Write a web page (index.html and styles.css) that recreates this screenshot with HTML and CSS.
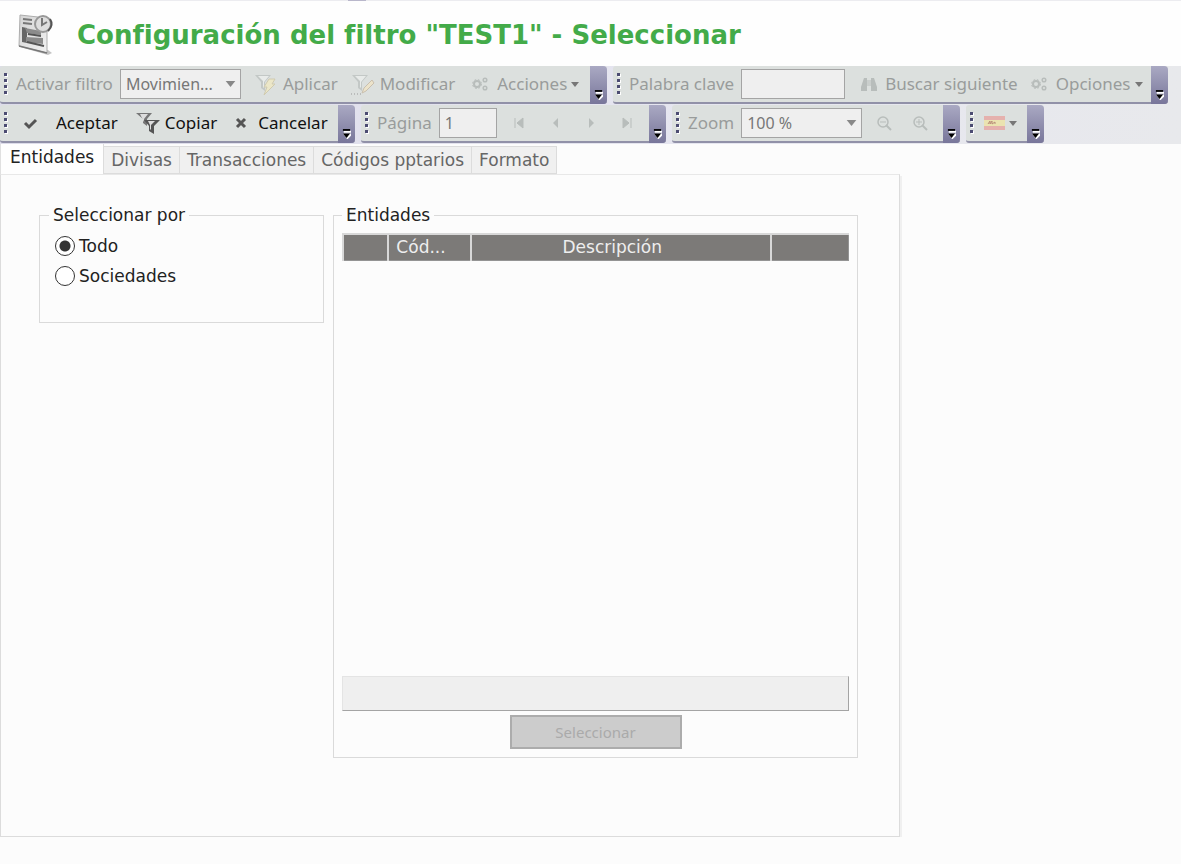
FILE: index.html
```html
<!DOCTYPE html>
<html lang="es">
<head>
	<meta charset="UTF-8">
	<title>Configuración del filtro</title>
	<meta name="viewport" content="width=device-width, initial-scale=1.0">
	<link rel="stylesheet" href="styles.css">
</head>
<body>

	<svg class="symbols" aria-hidden="true">
		<symbol id="gears" viewBox="0 0 16 16">
			<circle cx="5" cy="8" r="3" fill="none" stroke="currentColor" stroke-width="2"/>
			<circle cx="5" cy="8" r="4.500" fill="none" stroke="currentColor" stroke-dasharray="1.800 1.800"/>
			<circle cx="13" cy="4" r="1.800" fill="none" stroke="currentColor" stroke-width="1.500"/>
			<circle cx="13" cy="12" r="1.800" fill="none" stroke="currentColor" stroke-width="1.500"/>
		</symbol>
		<symbol id="funnel" viewBox="0 0 24 24">
			<path d="M1 3h16l-6 7v9l-4-3v-6z" fill="#c3c8c6"/>
			<path d="M4 4h11l-5 6v6l-1-1v-6z" fill="#e8ebe9"/>
		</symbol>
		<symbol id="overflow" viewBox="0 0 10 11">
			<path d="M2 3h8M3 6h7l-4 4z" fill="#fff" stroke="#fff" stroke-width="2"/>
			<path d="M1 1h8" stroke="#000" stroke-width="2"/>
			<path d="M1 5h8l-4 5z"/>
		</symbol>
		<symbol id="caret" viewBox="0 0 8 5">
			<path d="M0 0h8l-4 5z" fill="currentColor"/>
		</symbol>
		<symbol id="prev" viewBox="0 0 16 16">
			<path d="M11 3v10l-5-5z" fill="currentColor"/>
		</symbol>
	</svg>

	<div id="header">
		<svg class="logo" viewBox="0 0 40 46">
			<defs>
				<linearGradient id="sheet" x1="0" y1="0" x2="1" y2="1">
					<stop offset="0" stop-color="#d4d4d4"/>
					<stop offset="1" stop-color="#f1f1f1"/>
				</linearGradient>
			</defs>
			<path d="M4 35l28 8 4-2-4-3z" fill="#c4c4c4"/>
			<path d="M4 3l27 3v35L3 34z" fill="url(#sheet)" stroke="#adadad"/>
			<path d="M3 34l28 7" stroke="#777" stroke-width="1.500"/>
			<path d="M7 7l9 1M7 11l9 1" stroke="#777" stroke-width="2"/>
			<path d="M6 15l5 1v15l-5-1z" fill="#666"/>
			<path d="M9 16l16 3v4l-14-2zM10 25l17 1v6l-17-2z" fill="#8b8b8b"/>
			<path d="M12 22l13 2M11 30l17 4" stroke="#555" stroke-width="2"/>
			<circle cx="27" cy="12" r="8" fill="#dedede" stroke="#999" stroke-width="2"/>
			<path d="M34 7q4 6-2 12" fill="none" stroke="#555" stroke-width="2"/>
			<path d="M26 6v7l5-3" fill="none" stroke="#777" stroke-width="2"/>
		</svg>
		<h1>Configuración del filtro "TEST1" - Seleccionar</h1>
	</div>

	<div id="toolbars">
		<div class="row">
			<div class="toolbar filter">
				<span class="grip"></span>
				<label for="filter">Activar filtro</label>
				<span class="combo">
					<select id="filter" disabled><option>Movimien...</option></select>
					<svg class="arrow"><use href="#caret"/></svg>
				</span>
				<button disabled>
					<svg class="big" viewBox="0 0 24 24"><use href="#funnel"/><path d="M15 7h6l-3 5h3L10 23l3-8h-3z" fill="#ece7c8" stroke="#d0cbb0"/></svg>
					Aplicar
				</button>
				<button disabled>
					<svg class="big" viewBox="0 0 24 24"><use href="#funnel"/><path d="M11 21l2-5 8-8 2 3-8 8z" fill="#ece3ca" stroke="#c9bfae"/><path d="M0 22h11" stroke="#999" stroke-dasharray="1 2"/></svg>
					Modificar
				</button>
				<button class="menu" disabled>
					<svg class="small"><use href="#gears"/></svg>
					Acciones
					<svg class="caret"><use href="#caret"/></svg>
				</button>
				<button class="more" aria-label="Más opciones"><svg><use href="#overflow"/></svg></button>
			</div>
			<div class="toolbar search">
				<span class="grip"></span>
				<label for="keyword">Palabra clave</label>
				<input id="keyword" class="keyword" type="text" disabled>
				<button class="find" disabled>
					<svg class="small" viewBox="0 0 16 16"><path d="M3 2h3v2h4V2h3l3 9v4h-6v-5H6v5H0v-4z" fill="currentColor"/><path d="M7 4v6M9 4v6" stroke="#dce0de"/></svg>
					Buscar siguiente
				</button>
				<button class="menu" disabled>
					<svg class="small"><use href="#gears"/></svg>
					Opciones
					<svg class="caret"><use href="#caret"/></svg>
				</button>
				<button class="more" aria-label="Más opciones"><svg><use href="#overflow"/></svg></button>
			</div>
		</div>
		<div class="row">
			<div class="toolbar actions">
				<span class="grip"></span>
				<button class="accept">
					<svg class="small" viewBox="0 0 16 16"><path d="M3 8l4 4 7-7" fill="none" stroke="#555" stroke-width="3"/></svg>
					Aceptar
				</button>
				<button class="copy">
					<svg class="big" viewBox="0 0 24 24">
						<path d="M0 2h16l-5 6v7l-4-3V8z" fill="#777"/>
						<path d="M4 3h8L8 8v3L7 9z" fill="#ddd"/>
						<path d="M8 9h16l-6 6v8l-5-3v-5z" fill="#555"/>
						<path d="M12 10h7l-4 4v5l-1-1v-4z" fill="#ddd"/>
					</svg>
					Copiar
				</button>
				<button class="cancel">
					<svg class="small" viewBox="0 0 16 16"><path d="M4 4l8 8M12 4l-8 8" stroke="#555" stroke-width="3"/></svg>
					Cancelar
				</button>
				<button class="more" aria-label="Más opciones"><svg><use href="#overflow"/></svg></button>
			</div>
			<div class="toolbar pages">
				<span class="grip"></span>
				<label for="page">Página</label>
				<input id="page" class="page" type="text" value="1" disabled>
				<div class="pager">
					<button disabled aria-label="Primera"><svg class="small" viewBox="0 0 16 16"><path d="M4 3v10M12 3v10L6 8z" fill="currentColor" stroke="currentColor"/></svg></button>
					<button disabled aria-label="Anterior"><svg class="small"><use href="#prev"/></svg></button>
					<button disabled aria-label="Siguiente"><svg class="small" viewBox="0 0 16 16"><path d="M6 3v10l5-5z" fill="currentColor"/></svg></button>
					<button disabled aria-label="Última"><svg class="small" viewBox="0 0 16 16"><path d="M12 3v10M4 3v10l6-5z" fill="currentColor" stroke="currentColor"/></svg></button>
				</div>
				<button class="more" aria-label="Más opciones"><svg><use href="#overflow"/></svg></button>
			</div>
			<div class="toolbar zoom">
				<span class="grip"></span>
				<label for="zoom">Zoom</label>
				<span class="combo">
					<select id="zoom" disabled><option>100 %</option></select>
					<svg class="arrow"><use href="#caret"/></svg>
				</span>
				<div class="pager">
					<button disabled aria-label="Alejar"><svg class="small" viewBox="0 0 16 16"><path d="M10 10l5 5" stroke="currentColor" stroke-width="2"/><circle cx="7" cy="7" r="5" fill="none" stroke="currentColor" stroke-width="1.500"/><path d="M4 7h6" stroke="currentColor"/></svg></button>
					<button disabled aria-label="Acercar"><svg class="small" viewBox="0 0 16 16"><path d="M10 10l5 5" stroke="currentColor" stroke-width="2"/><circle cx="7" cy="7" r="5" fill="none" stroke="currentColor" stroke-width="1.500"/><path d="M4 7h6M7 4v6" stroke="currentColor"/></svg></button>
				</div>
				<button class="more" aria-label="Más opciones"><svg><use href="#overflow"/></svg></button>
			</div>
			<div class="toolbar language">
				<span class="grip"></span>
				<button class="menu" aria-label="Idioma">
					<svg class="flag" viewBox="0 0 21 14"><path d="M0 0h21v14H0z" fill="#e5b1ad"/><path d="M0 4h21v6H0z" fill="#ebe3b0"/><path d="M4 8l2-3v3l2-3v3l3-2v2" fill="none" stroke="#b98d78"/></svg>
					<svg class="caret"><use href="#caret"/></svg>
				</button>
				<button class="more" aria-label="Más opciones"><svg><use href="#overflow"/></svg></button>
			</div>
		</div>
	</div>

	<div id="tabs">
		<button class="active">Entidades</button>
		<button>Divisas</button>
		<button>Transacciones</button>
		<button>Códigos pptarios</button>
		<button>Formato</button>
	</div>

	<div id="main">
		<fieldset class="by">
			<legend>Seleccionar por</legend>
			<label><input type="radio" name="by" checked>Todo</label>
			<label><input type="radio" name="by">Sociedades</label>
		</fieldset>
		<fieldset class="entities">
			<legend>Entidades</legend>
			<table>
				<thead>
					<tr>
						<th class="mark"></th>
						<th class="code">Cód...</th>
						<th>Descripción</th>
						<th class="last"></th>
					</tr>
				</thead>
			</table>
			<div class="status"></div>
			<button class="select" disabled>Seleccionar</button>
		</fieldset>
	</div>

</body>
</html>
```

FILE: styles.css
```css
* {
	box-sizing: border-box;
}
body {
	background: #fcfcfc;
	color: #222;
	font-family: "DejaVu Sans", Verdana, sans-serif;
	font-size: 17px;
	line-height: 20px;
	margin: 0;
}
button, input, select {
	font: inherit;
	margin: 0;
}
.symbols {
	display: block;
	height: 0;
	width: 0;
}
#header {
	align-items: center;
	background:
		linear-gradient(#b9b7cb, #b9b7cb) 348px 0 / 18px 1px no-repeat,
		linear-gradient(#ececf0, #ececf0) 0 0 / 100% 1px no-repeat,
		#fefefe;
	display: flex;
	gap: 21px;
	height: 66px;
	padding: 3px 0 0 16px;
}
#header h1 {
	color: #43ab49;
	font-size: 26px;
	line-height: 32px;
	margin: 0;
}
.logo {
	height: 46px;
	width: 40px;
}

/* toolbars */
#toolbars {
	background: linear-gradient(to right, #dddcea, #e6e6f0 60%, #e8e9ec);
	font-family: "Noto Sans", Tahoma, sans-serif;
}
.row {
	display: flex;
	gap: 6px;
	padding-bottom: 1px;
}
.toolbar {
	align-items: center;
	background: #dce0de;
	border-bottom: 2px solid #9191a8;
	border-radius: 3px;
	color: #999c9b;
	display: flex;
	height: 38px;
}
.filter { width: 607px; }
.search { width: 555px; }
.actions { width: 355px; }
.pages { width: 305px; }
.zoom { width: 288px; }
.language { width: 78px; }
.grip {
	background:
		repeating-linear-gradient(#4c4c72 0 3px, transparent 3px 6px) 0 0 / 3px 21px no-repeat,
		repeating-linear-gradient(#fff 0 3px, transparent 3px 6px) 1px 1px / 3px 21px no-repeat;
	flex: none;
	height: 22px;
	margin: 0 8px 0 4px;
	width: 4px;
}
.toolbar label {
	margin-right: 7px;
	white-space: nowrap;
}
.toolbar button {
	align-items: center;
	background: none;
	border: 0;
	color: inherit;
	display: flex;
	gap: 5px;
	margin-left: 13px;
	padding: 0;
	white-space: nowrap;
}
.toolbar .menu {
	gap: 4px;
	margin-left: 17px;
}
.toolbar .menu .small {
	margin-right: 5px;
}
.toolbar .find, .toolbar .cancel {
	gap: 9px;
	margin-left: 16px;
}
.toolbar .copy {
	margin-left: 18px;
}
.toolbar .find {
	gap: 8px;
}
.search .menu {
	margin-left: 13px;
}
.toolbar .more {
	background: linear-gradient(#aaa9c3, #78769a);
	border-radius: 0 4px 4px 0;
	height: 38px;
	margin: 0 0 -2px auto;
	padding: 24px 4px 4px;
	width: 17px;
}
.more svg {
	flex: none;
	height: 10px;
	width: 9px;
}
.toolbar input, .toolbar select {
	appearance: none;
	background: #efefef;
	border: 1px solid #a4a4a4;
	border-radius: 0;
	color: #777;
	font-size: 16px;
	height: 30px;
	opacity: 1;
	padding: 0 5px;
}
.toolbar .keyword { width: 104px; }
.toolbar .page { width: 58px; }
.combo {
	display: flex;
	position: relative;
}
.combo select {
	width: 121px;
}
.arrow {
	color: #888;
	height: 6px;
	position: absolute;
	right: 5px;
	top: 12px;
	width: 11px;
}
.caret {
	color: #777;
	height: 5px;
	width: 8px;
}
.small {
	color: #b8bdbb;
	height: 16px;
	width: 16px;
}
.big {
	height: 24px;
	width: 24px;
}
.flag {
	height: 14px;
	width: 21px;
}
.actions button {
	color: #111;
}
.toolbar .accept {
	gap: 18px;
	margin-left: 6px;
}
.pager {
	display: flex;
	gap: 20px;
	margin-left: 14px;
}
.pager button {
	margin: 0;
}
.language .menu {
	margin-left: 2px;
}

/* tabs */
#tabs {
	align-items: flex-end;
	display: flex;
	height: 30px;
}
#tabs button {
	background: #f0f0f0;
	border: 1px solid #dcdcdc;
	border-left: 0;
	color: #666;
	height: 28px;
	padding: 0 7px;
}
#tabs .active {
	background: #fefefe;
	border-bottom: 0;
	border-left: 1px solid #e0e0e0;
	border-top: 0;
	color: #222;
	height: 30px;
	padding: 0 9px 4px;
}

#main {
	align-items: flex-start;
	border: 1px solid #dcdcdc;
	border-top-color: #e8e8e8;
	box-shadow: 2px 2px 0 #f0f0f0;
	display: flex;
	gap: 9px;
	max-width: 900px;
	min-height: 663px;
	padding: 30px 41px 0 38px;
}
fieldset {
	border: 1px solid #dadada;
	margin: 0;
	min-width: 0;
}
legend {
	padding: 0 4px;
}
.by {
	flex: 0 0 285px;
	height: 118px;
	padding: 6px 15px;
}
.by legend {
	margin-left: -6px;
}
.by label {
	align-items: center;
	display: flex;
	gap: 4px;
	height: 30px;
}
.by input {
	appearance: none;
	background: #fff;
	border: 1px solid #333;
	border-radius: 50%;
	height: 20px;
	width: 20px;
}
.by input:checked {
	background: radial-gradient(circle, #333 5px, #fff 6px);
}
.entities {
	display: flex;
	flex: 1;
	flex-direction: column;
	height: 553px;
	padding: 8px;
}
table {
	border-collapse: collapse;
	table-layout: fixed;
	width: 100%;
}
th {
	background: #7c7a78;
	border: 2px solid #d8d8d8;
	border-bottom: 1px solid #949494;
	color: #eee;
	font-weight: normal;
	height: 26px;
	padding: 0 17px 0 0;
	white-space: nowrap;
}
.mark { width: 45px; }
.code { width: 83px; }
.last { width: 78px; }
th:last-child {
	border-right: 1px solid #949494;
}
.status {
	background: #efefef;
	border: 1px solid #e4e4e4;
	border-bottom-color: #a4a4a4;
	border-right-color: #a4a4a4;
	height: 35px;
	margin-top: auto;
}
.select {
	align-self: center;
	background: #ccc;
	border: 2px solid #acacac;
	color: #aaa;
	font-family: "Noto Sans", Tahoma, sans-serif;
	font-size: 15px;
	height: 34px;
	margin-top: 4px;
	width: 172px;
}
```
